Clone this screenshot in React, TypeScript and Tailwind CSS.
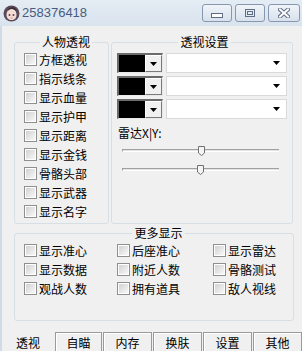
import React from "react";

const Box = () => (
  <span className="block w-[13px] h-[13px] border border-[#8e8f8f] bg-white p-px shrink-0">
    <span className="block w-full h-full bg-gradient-to-br from-[#d2d2d2] to-[#f8f8f8]" />
  </span>
);

const Check = ({ label }: { label: string }) => (
  <div className="flex items-center h-[19px] gap-[2px]">
    <Box />
    <span className="text-[12px] leading-[16px] text-black whitespace-nowrap">{label}</span>
  </div>
);

const Tri = () => (
  <svg width="7" height="4" viewBox="0 0 7 4">
    <path d="M0 0H7L3.5 4Z" fill="#000" />
  </svg>
);

const ColorRow = () => (
  <div className="flex items-center h-[20px] gap-[3px]">
    <div className="flex w-[46px] h-[20px] border-t-2 border-l-2 border-t-[#6b6b6b] border-l-[#6b6b6b] border-b border-r border-b-[#e8e8e8] border-r-[#e8e8e8]">
      <div className="flex-1 bg-black" />
      <div className="w-[17px] bg-[#f0f0f0] border-l border-t border-l-white border-t-white border-r border-b border-r-[#7a7a7a] border-b-[#7a7a7a] flex items-center justify-center">
        <Tri />
      </div>
    </div>
    <div className="w-[121px] h-[20px] bg-white border border-[#d9d9d9] flex items-center justify-end pr-[6px]">
      <Tri />
    </div>
  </div>
);

const Slider = ({ pos }: { pos: number }) => (
  <div className="relative h-[19px] ml-[5px] w-[157px] flex items-center">
    <div className="w-full h-[3px] border-t border-l border-[#a0a0a0] bg-[#e3e3e3] border-b border-b-white" />
    <svg
      className="absolute top-[5px]"
      style={{ left: pos }}
      width="7"
      height="10"
      viewBox="0 0 7 10"
    >
      <path d="M0.5 0.5H6.5V7L3.5 9.5L0.5 7Z" fill="#f4f4f4" stroke="#707070" />
      <path d="M1.5 6.5V2" stroke="#fff" />
    </svg>
  </div>
);

export default function App() {
  return (
    <div className="w-[302px] h-[351px] bg-[#f0f0f0] flex flex-col overflow-hidden font-['Noto_Sans_CJK_SC',sans-serif] text-black">
      {/* Title bar */}
      <div className="h-[26px] shrink-0 bg-gradient-to-b from-[#e4ecf4] to-[#d9e3ee] flex items-center pl-[3px] pr-[2px]">
        <svg width="17" height="17" viewBox="0 0 17 17" className="shrink-0">
          <circle cx="8.5" cy="8.5" r="8" fill="#5a4a5a" />
          <path d="M3.5 10c0-4 2-6 5-6s5 2 5 6c0 3-2 5-5 5s-5-2-5-5z" fill="#f2dcd4" />
          <path d="M3 9c1-3 3-5 6-5 2 0 4 1 5 4l-1-4-3-2-4 1z" fill="#3b2c36" />
          <circle cx="6.5" cy="10" r="1" fill="#6a3a5a" />
          <circle cx="10.5" cy="10" r="1" fill="#6a3a5a" />
          <path d="M7.5 13h2" stroke="#c98080" strokeWidth="0.8" />
        </svg>
        <span className="ml-[2px] font-['Liberation_Sans',sans-serif] text-[13px] leading-[16px] text-[#475c80]">258376418</span>
        <div className="flex-1" />
        <div className="flex items-center gap-[3px]">
          <div className="w-[30px] h-[18px] rounded-[3px] border border-[#8797b0] bg-gradient-to-b from-[#f0f4f9] to-[#d8e1ec] flex items-end justify-center pb-[3px]">
            <svg width="12" height="5" viewBox="0 0 12 5">
              <rect x="0.5" y="0.5" width="11" height="4" fill="#fff" stroke="#5f6c84" />
            </svg>
          </div>
          <div className="w-[30px] h-[18px] rounded-[3px] border border-[#8797b0] bg-gradient-to-b from-[#f0f4f9] to-[#d8e1ec] flex items-center justify-center">
            <svg width="10" height="8" viewBox="0 0 10 8">
              <rect x="0.5" y="0.5" width="9" height="7" fill="none" stroke="#5f6c84" />
              <rect x="2.5" y="2.5" width="5" height="3" fill="none" stroke="#5f6c84" />
            </svg>
          </div>
          <div className="w-[32px] h-[18px] rounded-[3px] border border-[#8797b0] bg-gradient-to-b from-[#f0f4f9] to-[#d8e1ec] flex items-center justify-center">
            <svg width="12" height="10" viewBox="0 0 12 10">
              <path d="M2 1.5L10 8.5M10 1.5L2 8.5" stroke="#5f6c84" strokeWidth="4" strokeLinecap="square" />
              <path d="M2 1.5L10 8.5M10 1.5L2 8.5" stroke="#fff" strokeWidth="2" strokeLinecap="square" />
            </svg>
          </div>
        </div>
      </div>

      {/* Body */}
      <div className="flex-1 flex flex-col border-l-2 border-l-[#cfdbe8] pl-[12px] pt-[8px]">
        <div className="flex h-[190px] gap-[2px]">
          <fieldset className="w-[95px] h-[190px] border border-[#d5dfe5] rounded-[3px] pl-[9px]">
            <legend className="mx-auto px-[2px] text-[12px] leading-[16px]">人物透视</legend>
            {["方框透视", "指示线条", "显示血量", "显示护甲", "显示距离", "显示金钱", "骨骼头部", "显示武器", "显示名字"].map((t) => (
              <Check key={t} label={t} />
            ))}
          </fieldset>
          <fieldset className="w-[182px] h-[190px] border border-[#d5dfe5] rounded-[3px] pl-[5px] pt-[3px]">
            <legend className="mx-auto px-[2px] text-[12px] leading-[16px]">透视设置</legend>
            <div className="flex flex-col gap-[3px]">
              <ColorRow />
              <ColorRow />
              <ColorRow />
            </div>
            <div className="mt-[6px] ml-[1px] text-[12px] leading-[16px]">雷达X|Y:</div>
            <Slider pos={76} />
            <Slider pos={75} />
          </fieldset>
        </div>

        <fieldset className="mt-[1px] w-[280px] h-[96px] border border-[#d5dfe5] rounded-[3px] pl-[9px]">
          <legend className="mx-auto px-[2px] text-[12px] leading-[16px]">更多显示</legend>
          <div className="grid grid-cols-[93px_96px_1fr]">
            {["显示准心", "后座准心", "显示雷达", "显示数据", "附近人数", "骨骼测试", "观战人数", "拥有道具", "敌人视线"].map((t) => (
              <Check key={t} label={t} />
            ))}
          </div>
        </fieldset>

        {/* Tabs */}
        <div className="mt-[11px] -ml-[14px] h-[19px] flex items-end">
          <div className="w-[55px] h-[19px] flex items-center justify-center pl-[1px] text-[12px] leading-[16px] pt-[3px]">透视</div>
          <div className="flex gap-px">
            {["自瞄", "内存", "换肤", "设置", "其他"].map((t, i) => (
              <div
                key={t}
                className={`${i === 0 ? "w-[47px]" : "w-[49px]"} h-[19px] border border-b-0 border-[#9a9a9a] shadow-[inset_1px_1px_0_#fff] flex items-center justify-center text-[12px] leading-[16px] pt-[2px]`}
              >
                {t}
              </div>
            ))}
          </div>
        </div>
      </div>
    </div>
  );
}
